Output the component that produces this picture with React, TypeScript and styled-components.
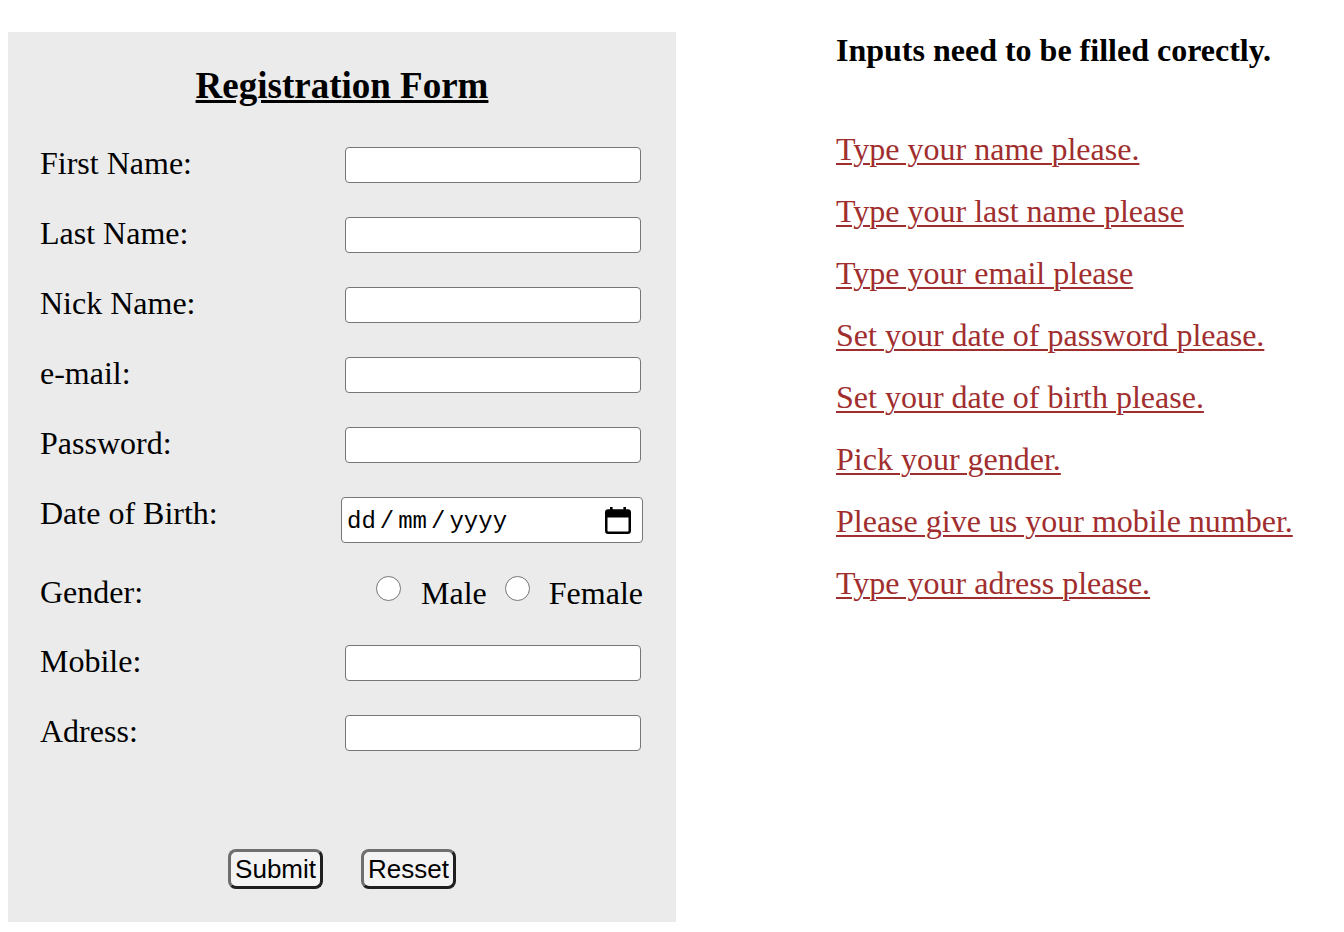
import React from "react";
import styled, { createGlobalStyle } from "styled-components";

const Global = createGlobalStyle`
  body {
    margin: 8px;
    background: #ffffff;
    font-family: "Liberation Serif", "Times New Roman", serif;
    color: #000;
  }
`;

const Page = styled.div`
  display: flex;
  align-items: flex-start;
  padding-top: 24px;
`;

const Panel = styled.form`
  width: 668px;
  box-sizing: border-box;
  background: #ebebeb;
  padding: 33px 33px 33px 32px;
  display: flex;
  flex-direction: column;
`;

const Title = styled.h2`
  margin: 0;
  font-size: 37px;
  line-height: 42px;
  font-weight: bold;
  text-decoration: underline;
  text-align: center;
  padding-left: 1px;
`;

const Rows = styled.div`
  margin-top: 23px;
  display: flex;
  flex-direction: column;
`;

const Row = styled.div<{ $h: number }>`
  height: ${(p) => p.$h}px;
  display: flex;
  align-items: center;
  justify-content: space-between;
`;

const Label = styled.label<{ $lift?: number }>`
  font-size: 32px;
  line-height: 37px;
  margin-bottom: ${(p) => p.$lift ?? 4}px;
`;

const TextInput = styled.input`
  width: 296px;
  height: 36px;
  box-sizing: border-box;
  border: 1px solid #767676;
  border-radius: 4px;
  background: #fff;
  margin: 0 2px 0 0;
  padding: 0 4px;
  font-size: 20px;
`;

const DateBox = styled.div`
  width: 302px;
  height: 46px;
  box-sizing: border-box;
  border: 1px solid #767676;
  border-radius: 4px;
  background: #fff;
  display: flex;
  align-items: center;
  justify-content: space-between;
  padding: 0 11px 0 5px;
  font-family: "Liberation Mono", "Courier New", monospace;
  font-size: 24px;
`;

const DateText = styled.span`
  display: flex;
  align-items: center;
  padding-top: 3px;
`;

const Sep = styled.span`
  margin: 0 4px;
`;

const Genders = styled.div`
  display: flex;
  align-items: center;
`;

const Radio = styled.span<{ $gap: number }>`
  width: 25px;
  height: 25px;
  box-sizing: border-box;
  border: 1.5px solid #767676;
  border-radius: 50%;
  background: #fff;
  margin: 0 ${(p) => p.$gap}px 11px 0;
`;

const Choice = styled.span<{ $gap?: number }>`
  font-size: 32px;
  line-height: 37px;
  margin-right: ${(p) => p.$gap ?? 0}px;
  margin-bottom: 2px;
`;

const Buttons = styled.div`
  margin-top: 81px;
  display: flex;
  justify-content: center;
  gap: 38px;
  padding-left: 1px;
`;

const Button = styled.button`
  height: 40px;
  box-sizing: border-box;
  padding: 0 4px;
  border-width: 3px;
  border-style: solid;
  border-color: #6f6f6f #1f1f1f #1f1f1f #6f6f6f;
  border-radius: 8px;
  background: #f3f3f3;
  font-family: "Liberation Sans", Arial, sans-serif;
  font-size: 26px;
  line-height: 32px;
  color: #000;
`;

const Side = styled.div`
  margin-left: 160px;
  display: flex;
  flex-direction: column;
`;

const Notice = styled.h3`
  margin: 0;
  font-size: 32px;
  line-height: 37px;
  font-weight: bold;
`;

const Hints = styled.div`
  margin-top: 62px;
  display: flex;
  flex-direction: column;
  gap: 25px;
`;

const Hint = styled.a`
  font-size: 32px;
  line-height: 37px;
  color: #a02e2e;
  text-decoration: underline;
  text-underline-offset: 3px;
  text-decoration-thickness: 2px;
`;

const CalendarIcon = () => (
  <svg width="26" height="27" viewBox="0 0 26 27">
    <rect x="5" y="0" width="2.6" height="5" fill="#000" />
    <rect x="18.4" y="0" width="2.6" height="5" fill="#000" />
    <rect x="1.25" y="3.5" width="23.5" height="22.25" rx="2" fill="none" stroke="#000" strokeWidth="2.5" />
    <rect x="1" y="3" width="24" height="7.5" fill="#000" />
  </svg>
);

const fields = [
  { label: "First Name:" },
  { label: "Last Name:" },
  { label: "Nick Name:" },
  { label: "e-mail:" },
  { label: "Password:" },
];

const hints = [
  "Type your name please.",
  "Type your last name please",
  "Type your email please",
  "Set your date of password please.",
  "Set your date of birth please.",
  "Pick your gender.",
  "Please give us your mobile number.",
  "Type your adress please.",
];

export default function App() {
  return (
    <>
      <Global />
      <Page>
        <Panel onSubmit={(e) => e.preventDefault()}>
          <Title>Registration Form</Title>
          <Rows>
            {fields.map((f) => (
              <Row key={f.label} $h={70}>
                <Label>{f.label}</Label>
                <TextInput type="text" />
              </Row>
            ))}
            <Row $h={80}>
              <Label $lift={14}>Date of Birth:</Label>
              <DateBox>
                <DateText>
                  dd<Sep>/</Sep>mm<Sep>/</Sep>yyyy
                </DateText>
                <CalendarIcon />
              </DateBox>
            </Row>
            <Row $h={68}>
              <Label>Gender:</Label>
              <Genders>
                <Radio $gap={20} />
                <Choice $gap={18}>Male</Choice>
                <Radio $gap={19} />
                <Choice>Female</Choice>
              </Genders>
            </Row>
            <Row $h={70}>
              <Label>Mobile:</Label>
              <TextInput type="text" />
            </Row>
            <Row $h={70}>
              <Label>Adress:</Label>
              <TextInput type="text" />
            </Row>
          </Rows>
          <Buttons>
            <Button type="submit">Submit</Button>
            <Button type="reset">Resset</Button>
          </Buttons>
        </Panel>
        <Side>
          <Notice>Inputs need to be filled corectly.</Notice>
          <Hints>
            {hints.map((h) => (
              <Hint key={h} href="#">
                {h}
              </Hint>
            ))}
          </Hints>
        </Side>
      </Page>
    </>
  );
}
